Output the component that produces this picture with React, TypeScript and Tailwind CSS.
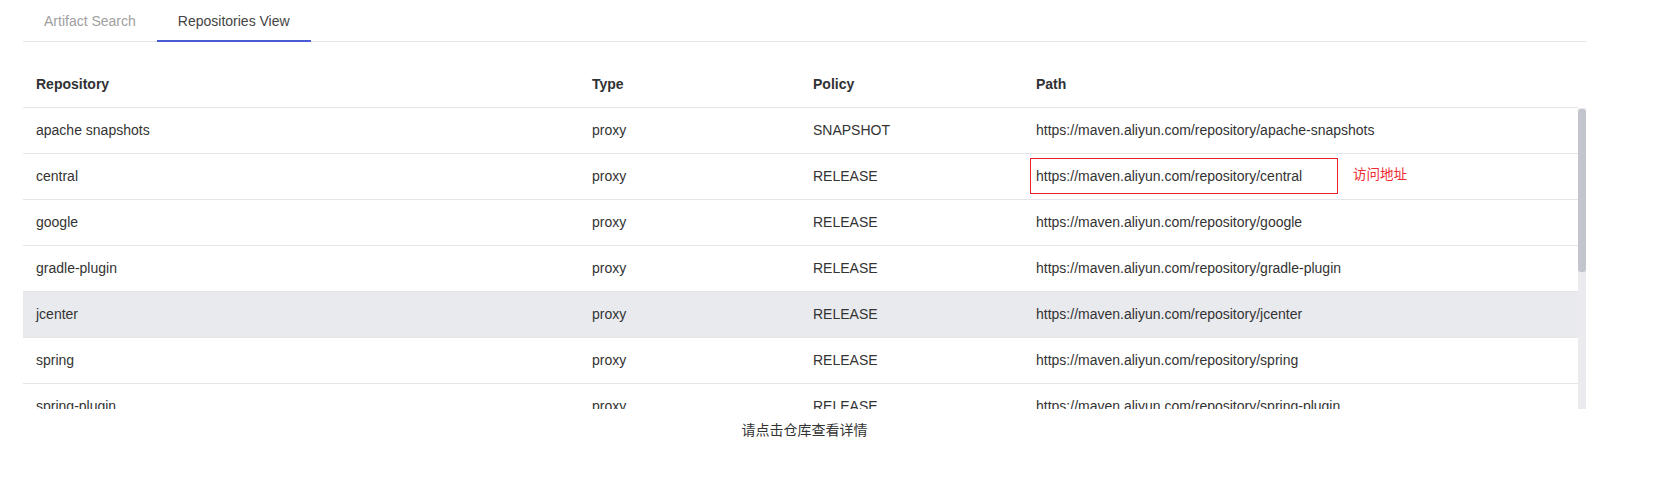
import React from "react";

type Repo = {
  name: string;
  type: string;
  policy: string;
  path: string;
};

const repos: Repo[] = [
  { name: "apache snapshots", type: "proxy", policy: "SNAPSHOT", path: "https://maven.aliyun.com/repository/apache-snapshots" },
  { name: "central", type: "proxy", policy: "RELEASE", path: "https://maven.aliyun.com/repository/central" },
  { name: "google", type: "proxy", policy: "RELEASE", path: "https://maven.aliyun.com/repository/google" },
  { name: "gradle-plugin", type: "proxy", policy: "RELEASE", path: "https://maven.aliyun.com/repository/gradle-plugin" },
  { name: "jcenter", type: "proxy", policy: "RELEASE", path: "https://maven.aliyun.com/repository/jcenter" },
  { name: "spring", type: "proxy", policy: "RELEASE", path: "https://maven.aliyun.com/repository/spring" },
  { name: "spring-plugin", type: "proxy", policy: "RELEASE", path: "https://maven.aliyun.com/repository/spring-plugin" },
  { name: "public", type: "group", policy: "RELEASE", path: "https://maven.aliyun.com/repository/public" },
];

export default function App() {
  const hovered = "jcenter";
  const marked = "central";

  return (
    <div
      className="w-[1654px] h-[485px] bg-white text-[#333333] text-[14px]"
      style={{ fontFamily: '"Liberation Sans", Arial, "Noto Sans CJK SC", sans-serif' }}
    >
      <div className="ml-[23px] w-[1563px]">
        {/* tabs */}
        <div className="flex h-[42px] border-b border-[#e4e4e7]">
          <div className="px-[21px] flex items-center text-[#a0a0a0] pt-[2px]">Artifact Search</div>
          <div className="px-[21px] flex items-center text-[#444] border-b-2 border-[#4b5bd6] -mb-px pt-[2px]">
            Repositories View
          </div>
        </div>

        {/* table header */}
        <div className="mt-[20px] flex h-[46px] w-[1555px] border-b border-[#e6e6e8] font-bold text-[#303133]">
          <div className="w-[556px] pl-[13px] flex items-center">Repository</div>
          <div className="w-[221px] pl-[13px] flex items-center">Type</div>
          <div className="w-[223px] pl-[13px] flex items-center">Policy</div>
          <div className="flex-1 pl-[13px] flex items-center">Path</div>
        </div>

        {/* table body with scrollbar */}
        <div className="flex h-[301px] overflow-hidden">
          <div className="w-[1555px]">
            {repos.map((r) => (
              <div
                key={r.name}
                className={
                  "flex h-[46px] border-b border-[#e6e6e8] " +
                  (r.name === hovered ? "bg-[#e9eaee]" : "bg-white")
                }
              >
                <div className="w-[556px] pl-[13px] flex items-center">{r.name}</div>
                <div className="w-[221px] pl-[13px] flex items-center">{r.type}</div>
                <div className="w-[223px] pl-[13px] flex items-center">{r.policy}</div>
                <div className="relative flex-1 pl-[13px] flex items-center">
                  {r.path}
                  {r.name === marked && (
                    <>
                      <span className="absolute left-[7px] top-[4px] w-[308px] h-[36px] border border-[#e4232e]" />
                      <span className="absolute left-[330px] top-[13px] leading-[16px] text-[13.5px] text-[#ee2b33]">
                        访问地址
                      </span>
                    </>
                  )}
                </div>
              </div>
            ))}
          </div>
          <div className="w-[8px] h-full bg-[#eaeaef]">
            <div className="mt-px h-[163px] rounded-[3px] bg-[#c2c5cd]" />
          </div>
        </div>

        {/* footer hint */}
        <div className="mt-[13px] text-center leading-[16px] text-[#333]">请点击仓库查看详情</div>
      </div>
    </div>
  );
}
